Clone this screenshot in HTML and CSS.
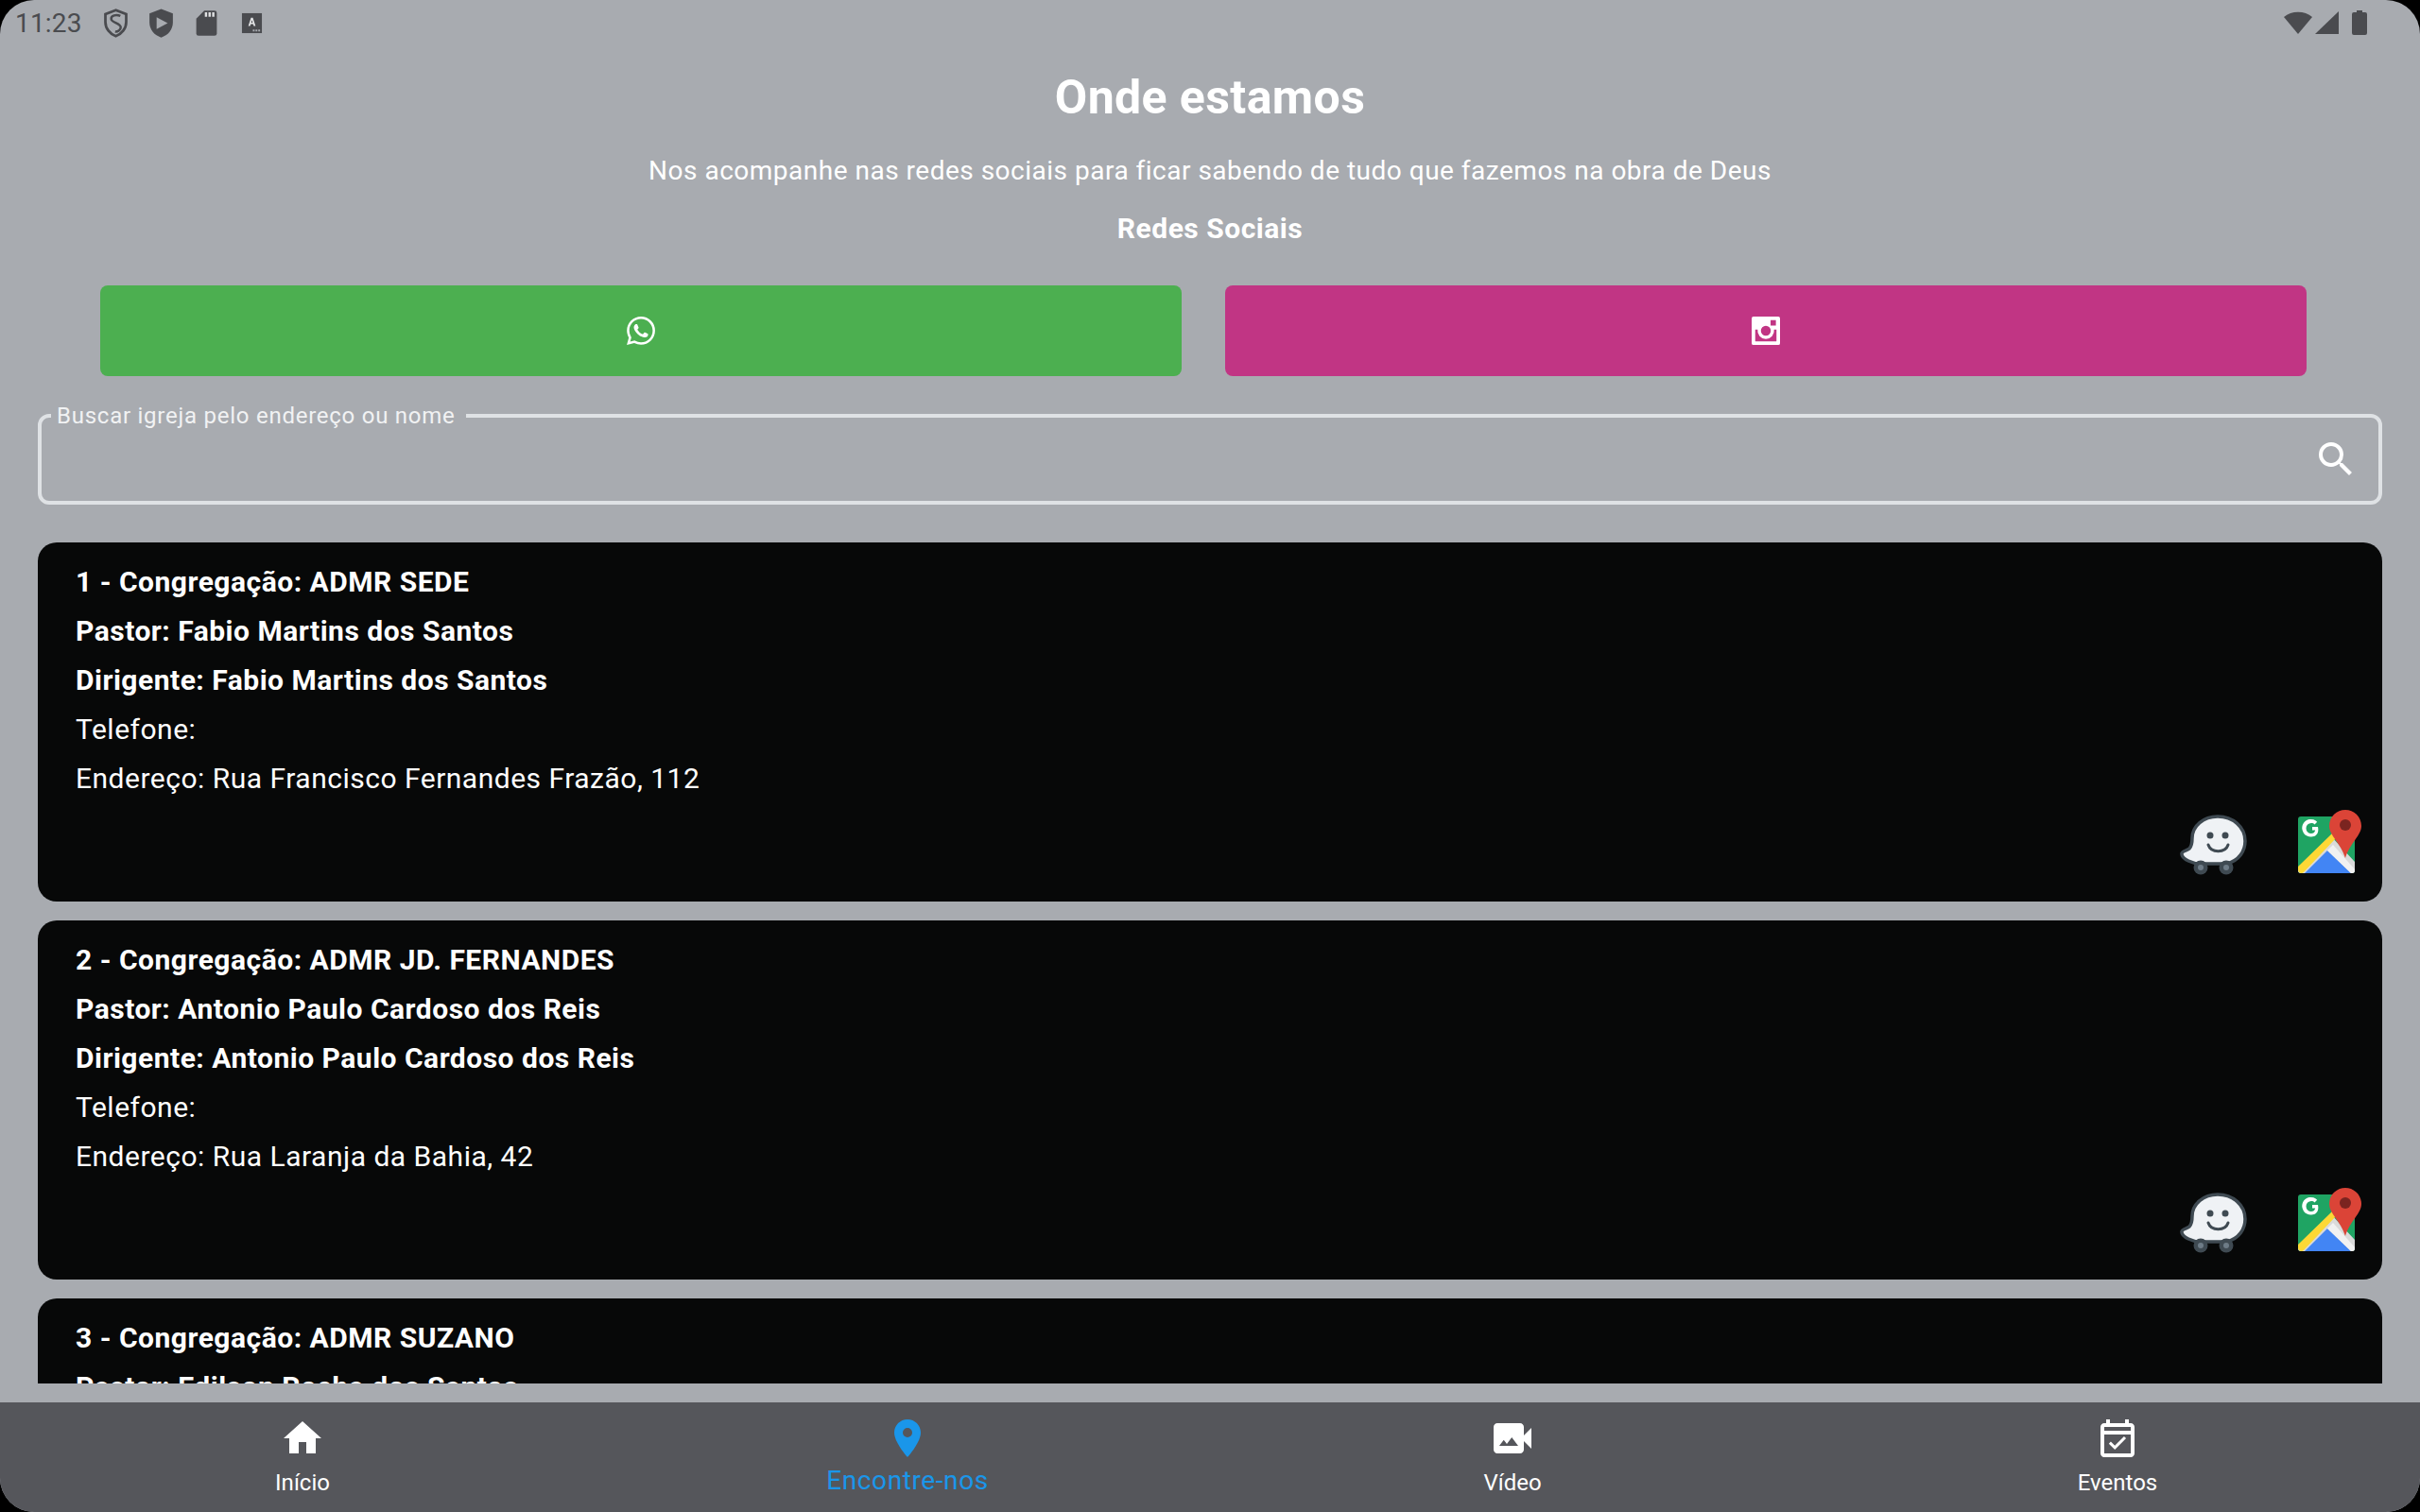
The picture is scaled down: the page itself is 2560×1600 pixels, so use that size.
FILE: index.html
```html
<!DOCTYPE html>
<html lang="pt">
<head>
<meta charset="utf-8">
<title>Onde estamos</title>
<link rel="stylesheet" href="styles.css">
</head>
<body>
<div class="screen">
  <div class="status">
    <span class="clock">11:23</span>
    <svg class="st st-shield" viewBox="0 0 24 24"><path d="M12 2 4 5v6c0 5 3.400 9.400 8 11 4.600-1.600 8-6 8-11V5z" fill="none" stroke="#4a4b4f" stroke-width="2"/><path d="M15.500 6.500c-3-1.500-7.500-.5-7 2.500.4 2.500 7 3 7.300 6 .2 2-2.300 3.800-4.300 3.500" fill="none" stroke="#4a4b4f" stroke-width="1.800"/></svg>
    <svg class="st st-play" viewBox="0 0 24 24"><path d="M12 1 3 4.500v7C3 17 6.800 21.500 12 23c5.200-1.500 9-6 9-11.500v-7z" fill="#4a4b4f"/><path d="M8.500 7.500v9L17 12z" fill="#a8abb0"/></svg>
    <svg class="st st-sd" viewBox="0 0 24 24"><path d="M10 1h9a2 2 0 0 1 2 2v18a2 2 0 0 1-2 2H5a2 2 0 0 1-2-2V8z" fill="#4a4b4f"/><path d="M10.500 2.500h2v4h-2zM13.700 2.500h2v4h-2zM16.900 2.500h2v4h-2z" fill="#dfe0e2"/></svg>
    <svg class="st st-a" viewBox="0 0 24 24"><rect x="1" y="1" width="22" height="22" fill="#4a4b4f"/><path d="M8 15 11 6h2l3 9h-2l-.6-2h-2.800L10 15zM11.100 11.400h1.800L12 8.500z" fill="#e4e5e7"/><path d="M13 19h2v2h-2zM16 19h2v2h-2zM19 19h2v2h-2z" fill="#a8abb0"/></svg>
    <span class="status-fill"></span>
    <svg class="st-wifi" viewBox="0 0 30 24"><path d="M0 6C8-1 22-1 30 6L15 24z" fill="#4a4b4f"/></svg>
    <svg class="st-signal" viewBox="0 0 25 24"><path d="M25 0v24H0z" fill="#4a4b4f"/></svg>
    <svg class="st-batt" viewBox="0 0 16 26"><path d="M5 0h6v2h3a2 2 0 0 1 2 2v20a2 2 0 0 1-2 2H2a2 2 0 0 1-2-2V4a2 2 0 0 1 2-2h3z" fill="#4a4b4f"/></svg>
  </div>

  <main class="main">
    <h1 class="title">Onde estamos</h1>
    <p class="lead">Nos acompanhe nas redes sociais para ficar sabendo de tudo que fazemos na obra de Deus</p>
    <p class="section">Redes Sociais</p>

    <div class="socials">
      <a class="social social-wa">
        <svg class="social-icon" viewBox="0 0 24 24"><path fill="#fff" d="M17.472 14.382c-.297-.149-1.758-.867-2.030-.967-.273-.099-.471-.148-.670.150-.197.297-.767.966-.940 1.164-.173.199-.347.223-.644.075-.297-.150-1.255-.463-2.390-1.475-.883-.788-1.480-1.761-1.653-2.059-.173-.297-.018-.458.130-.606.134-.133.298-.347.446-.520.149-.174.198-.298.298-.497.099-.198.050-.371-.025-.520-.075-.149-.669-1.612-.916-2.207-.242-.579-.487-.500-.669-.510-.173-.008-.371-.010-.570-.010-.198 0-.520.074-.792.372-.272.297-1.040 1.016-1.040 2.479 0 1.462 1.065 2.875 1.213 3.074.149.198 2.096 3.200 5.077 4.487.709.306 1.262.489 1.694.625.712.227 1.360.195 1.871.118.571-.085 1.758-.719 2.006-1.413.248-.694.248-1.289.173-1.413-.074-.124-.272-.198-.570-.347m-5.421 7.403h-.004a9.870 9.870 0 0 1-5.031-1.378l-.361-.214-3.741.982.998-3.648-.235-.374a9.860 9.860 0 0 1-1.510-5.260c.001-5.450 4.436-9.884 9.888-9.884 2.640 0 5.122 1.030 6.988 2.898a9.825 9.825 0 0 1 2.893 6.994c-.003 5.450-4.437 9.884-9.885 9.884m8.413-18.297A11.815 11.815 0 0 0 12.050 0C5.495 0 .160 5.335.157 11.892c0 2.096.547 4.142 1.588 5.945L.057 24l6.305-1.654a11.882 11.882 0 0 0 5.683 1.448h.005c6.554 0 11.890-5.335 11.893-11.893a11.821 11.821 0 0 0-3.480-8.413z"/></svg>
      </a>
      <a class="social social-ig">
        <svg class="social-icon" viewBox="0 0 24 24"><path fill="#fff" fill-rule="evenodd" d="M1.500 0h21A1.500 1.500 0 0 1 24 1.500v21a1.500 1.500 0 0 1-1.500 1.500h-21A1.500 1.500 0 0 1 0 22.500v-21A1.500 1.500 0 0 1 1.500 0zM16 3v4.500h4.500V3zM3 11v9.500c0 .3.200.5.500.5h17c.3 0 .5-.2.500-.5V11h-2.070a7 7 0 1 1-13.860 0zM12 7.800a4.200 4.200 0 1 0 0 8.400 4.200 4.200 0 0 0 0-8.400z"/></svg>
      </a>
    </div>

    <fieldset class="search">
      <legend class="search-label">Buscar igreja pelo endereço ou nome</legend>
      <svg class="search-icon" viewBox="0 0 24 24"><path fill="#fff" d="M15.500 14h-.79l-.28-.27A6.470 6.470 0 0 0 16 9.500 6.500 6.500 0 1 0 9.500 16c1.610 0 3.090-.59 4.230-1.570l.27.28v.79l5 4.990L20.490 19l-4.990-5zm-6 0C7.010 14 5 11.990 5 9.500S7.010 5 9.500 5 14 7.010 14 9.500 11.990 14 9.500 14z"/></svg>
    </fieldset>

    <div class="list">
      <article class="card">
        <p class="line strong">1 - Congregação: ADMR SEDE</p>
        <p class="line strong">Pastor: Fabio Martins dos Santos</p>
        <p class="line strong">Dirigente: Fabio Martins dos Santos</p>
        <p class="line">Telefone:</p>
        <p class="line">Endereço: Rua Francisco Fernandes Frazão, 112</p>
        <div class="card-actions">
          <svg class="waze" viewBox="0 0 72 66"><use href="#waze-icon"/></svg>
          <svg class="gmaps" viewBox="0 0 68 68"><use href="#maps-icon"/></svg>
        </div>
      </article>
      <article class="card">
        <p class="line strong">2 - Congregação: ADMR JD. FERNANDES</p>
        <p class="line strong">Pastor: Antonio Paulo Cardoso dos Reis</p>
        <p class="line strong">Dirigente: Antonio Paulo Cardoso dos Reis</p>
        <p class="line">Telefone:</p>
        <p class="line">Endereço: Rua Laranja da Bahia, 42</p>
        <div class="card-actions">
          <svg class="waze" viewBox="0 0 72 66"><use href="#waze-icon"/></svg>
          <svg class="gmaps" viewBox="0 0 68 68"><use href="#maps-icon"/></svg>
        </div>
      </article>
      <article class="card">
        <p class="line strong">3 - Congregação: ADMR SUZANO</p>
        <p class="line strong">Pastor: Edilson Rocha dos Santos</p>
      </article>
    </div>
  </main>

  <nav class="nav">
    <a class="nav-item">
      <svg class="nav-icon" viewBox="0 0 24 24"><path fill="#fff" d="M10 20v-6h4v6h5v-8h3L12 3 2 12h3v8z"/></svg>
      <span class="nav-label">Início</span>
    </a>
    <a class="nav-item active">
      <svg class="nav-icon" viewBox="0 0 24 24"><path fill="#1a96ea" d="M12 2C8.130 2 5 5.130 5 9c0 5.250 7 13 7 13s7-7.750 7-13c0-3.870-3.130-7-7-7zm0 9.500a2.500 2.500 0 0 1 0-5 2.500 2.500 0 0 1 0 5z"/></svg>
      <span class="nav-label">Encontre-nos</span>
    </a>
    <a class="nav-item">
      <svg class="nav-icon" viewBox="0 0 24 24"><path fill="#fff" d="M18 10.480V6c0-1.100-.9-2-2-2H4c-1.100 0-2 .9-2 2v12c0 1.100.9 2 2 2h12c1.100 0 2-.9 2-2v-4.480l4 3.980v-11l-4 3.980zM5 16l2.380-3.170L9 15l2.620-3.500L15 16H5z"/></svg>
      <span class="nav-label">Vídeo</span>
    </a>
    <a class="nav-item">
      <svg class="nav-icon" viewBox="0 0 24 24"><path fill="#fff" d="M19 4h-1V2h-2v2H8V2H6v2H5c-1.110 0-2 .9-2 2v14c0 1.100.89 2 2 2h14c1.100 0 2-.9 2-2V6c0-1.100-.9-2-2-2zm0 16H5V10h14v10zm0-12H5V6h14v2z"/><path fill="#fff" d="M16.530 12.060 15.470 11l-4.880 4.880-2.120-2.120-1.060 1.060L10.590 18z"/></svg>
      <span class="nav-label">Eventos</span>
    </a>
  </nav>
</div>

<svg class="defs" aria-hidden="true">
  <defs>
    <g id="waze-icon">
      <path d="M40 2C25 2 13 12 13 25c0 6-1 9-3 11-2 2-7 2-8 5-.5 3 3 6 7 8 4 2 10 3 13 3h27c14-3 20-14 20-24C69 13 56 2 40 2z" fill="#eff2f5" stroke="#3f4a52" stroke-width="3.500"/>
      <circle cx="22" cy="56" r="7.500" fill="#3f4a52"/><circle cx="22" cy="56" r="3" fill="#6e7c87"/>
      <circle cx="49" cy="56" r="7.500" fill="#3f4a52"/><circle cx="49" cy="56" r="3" fill="#6e7c87"/>
      <circle cx="32" cy="22" r="3.500" fill="#3f4a52"/><circle cx="48" cy="22" r="3.500" fill="#3f4a52"/>
      <path d="M30 32c3 9 18 9 21 0" fill="none" stroke="#3f4a52" stroke-width="3" stroke-linecap="round"/>
    </g>
    <g id="maps-icon">
      <rect x="0" y="7" width="60" height="60" rx="3" fill="#1fa463"/>
      <path d="M0 62 35 28l25 27v9a3 3 0 0 1-3 3H3a3 3 0 0 1-3-3z" fill="#dadada"/>
      <path d="M7 67 31 43l25 24z" fill="#4285f4"/>
      <path d="M0 60 36 25l4 5L6 66a3 3 0 0 1-3 1q-3-1-3-4z" fill="#fdd835"/>
      <path d="M31 43l6-6 23 26v1a3 3 0 0 1-3 3h-1z" fill="#f1f1f1"/>
      <path d="M50 0c-9 0-17 7-17 17 0 10 12 18 17 34 5-16 17-24 17-34C67 7 59 0 50 0z" fill="#db4437"/>
      <circle cx="50" cy="16" r="6" fill="#7b2420"/>
      <path transform="translate(-3 -2)" d="M24 20h-6v3.500h3.200c-.5 2.400-2.200 3.500-4.200 3.500a5.500 5.500 0 0 1 0-11c1.400 0 2.600.5 3.500 1.400l2.700-2.700A9.300 9.300 0 1 0 17 30.500c5 0 8.500-3.500 7-10.500z" fill="#fff"/>
    </g>
  </defs>
</svg>
</body>
</html>
```

FILE: styles.css
```css
* { box-sizing: border-box; }
html, body { margin: 0; padding: 0; height: 100%; background: #000; }
body { font-family: Roboto, "Liberation Sans", sans-serif; color: #fff; overflow: hidden; }
p, h1 { margin: 0; }

.screen {
  width: 2560px;
  height: 1600px;
  background: #a8abb0;
  border-radius: 36px;
  overflow: hidden;
  display: flex;
  flex-direction: column;
}

.status {
  height: 48px;
  flex: none;
  display: flex;
  align-items: center;
  padding: 0 56px 0 16px;
  color: #4a4b4f;
}
.clock { font-size: 28px; width: 89.500px; letter-spacing: .2px; }
.st { flex: none; }
.st-shield { width: 33px; height: 33px; margin-right: 15px; }
.st-play { width: 33px; height: 33px; margin-right: 17px; }
.st-sd { width: 29px; height: 29px; margin-right: 22px; }
.st-a { width: 23px; height: 23px; }
.status-fill { flex: 1; }
.st-wifi { width: 30px; height: 24px; margin-right: 3px; }
.st-signal { width: 25px; height: 24px; margin-right: 14px; }
.st-batt { width: 16px; height: 26px; }

.main {
  flex: 1;
  min-height: 0;
  display: flex;
  flex-direction: column;
  padding: 0 40px;
  margin-bottom: 20px;
  overflow: hidden;
}

.title {
  text-align: center;
  font-size: 50px;
  font-weight: 700;
  line-height: 56px;
  letter-spacing: .4px;
  margin-top: 27px;
}
.lead {
  text-align: center;
  font-size: 28px;
  line-height: 36px;
  letter-spacing: .5px;
  margin-top: 32px;
}
.section {
  text-align: center;
  font-size: 30px;
  font-weight: 700;
  line-height: 36px;
  letter-spacing: .5px;
  margin-top: 25px;
}

.socials {
  display: flex;
  gap: 46px;
  padding: 0 80px 0 66px;
  margin-top: 42px;
  flex: none;
}
.social {
  flex: 1;
  height: 96px;
  border-radius: 8px;
  display: flex;
  align-items: center;
  justify-content: center;
}
.social-wa { background: #4caf50; }
.social-ig { background: #c13584; }
.social-icon { width: 30px; height: 30px; }

.search {
  flex: none;
  margin: 27px 0 0;
  height: 109px;
  padding: 0 32px 0 10px;
  border: 4px solid #dfe2e5;
  border-radius: 12px;
  display: flex;
  align-items: center;
  justify-content: flex-end;
  min-width: 0;
}
.search-label {
  font-size: 24px;
  line-height: 30px;
  letter-spacing: .75px;
  color: #f1f2f3;
  padding: 0 11px 0 6px;
}
.search-icon { width: 48px; height: 48px; margin-right: -11px; margin-top: 7px; }

.list {
  display: flex;
  flex-direction: column;
  gap: 20px;
  margin-top: 40px;
  flex: none;
}
.card {
  background: #070808;
  border-radius: 20px;
  height: 380px;
  padding: 16px 40px;
  flex: none;
  display: flex;
  flex-direction: column;
}
.line {
  font-size: 30px;
  line-height: 52px;
  letter-spacing: .5px;
}
.strong { font-weight: 700; }
.card-actions {
  display: flex;
  justify-content: flex-end;
  align-items: flex-start;
  gap: 53px;
  margin-top: 7px;
  margin-right: -19px;
}
.waze { width: 72px; height: 66px; margin-top: 5px; }
.gmaps { width: 68px; height: 68px; }

.nav {
  flex: none;
  height: 116px;
  background: #55565b;
  display: grid;
  grid-template-columns: repeat(4, 1fr);
}
.nav-item {
  display: flex;
  flex-direction: column;
  align-items: center;
  padding-top: 14px;
}
.nav-icon { width: 48px; height: 48px; }
.nav-label {
  font-size: 24px;
  line-height: 30px;
  margin-top: 8px;
}
.active .nav-label { font-size: 28px; line-height: 34px; margin-top: 4px; color: #1a96ea; letter-spacing: .6px; }

.defs { width: 0; height: 0; position: absolute; }
```
